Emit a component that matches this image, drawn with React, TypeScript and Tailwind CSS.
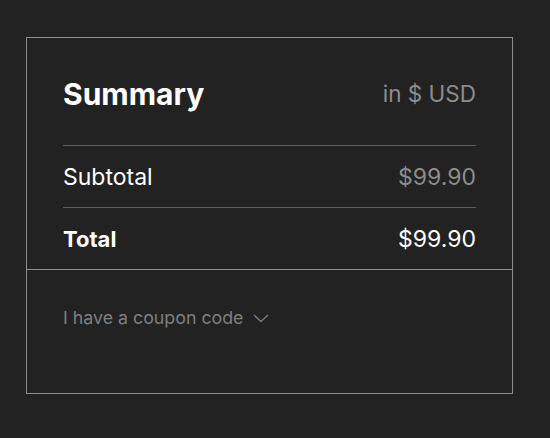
export default function App() {
  return (
    <div className="min-h-[438px] w-full bg-[#222222] pl-[26px] pt-[37px] font-['Inter','Liberation_Sans',sans-serif]">
      <div className="w-[487px] border border-[#8e8e8e]">
        {/* Summary block */}
        <div className="px-[36px] pt-[38px]">
          <div className="flex items-center justify-between pb-[33px]">
            <h2 className="text-[30px] leading-[36px] font-bold text-white">Summary</h2>
            <span className="text-[22.5px] leading-[36px] text-[#8c8c8c]">in $ USD</span>
          </div>
          <div className="flex items-center justify-between border-t border-[#5e5e5e] py-[15.5px]">
            <span className="text-[23px] leading-[30px] text-white">Subtotal</span>
            <span className="text-[23px] leading-[30px] text-[#8c8c8c]">$99.90</span>
          </div>
          <div className="flex items-center justify-between border-t border-[#5e5e5e] py-[15.5px]">
            <span className="text-[22px] leading-[30px] font-bold text-white">Total</span>
            <span className="text-[23px] leading-[30px] text-white">$99.90</span>
          </div>
        </div>

        {/* Coupon */}
        <div className="h-[124px] border-t border-[#8e8e8e] px-[36px] pt-[36px]">
          <button className="flex items-center gap-[10px] text-[17.8px] leading-[24px] text-[#7e7e7e]">
            I have a coupon code
            <svg width="16" height="16" viewBox="0 0 16 16" fill="none" stroke="#7e7e7e" strokeWidth="1.3">
              <path d="M1 5 8 11.5 15 5" />
            </svg>
          </button>
        </div>
      </div>
    </div>
  );
}
